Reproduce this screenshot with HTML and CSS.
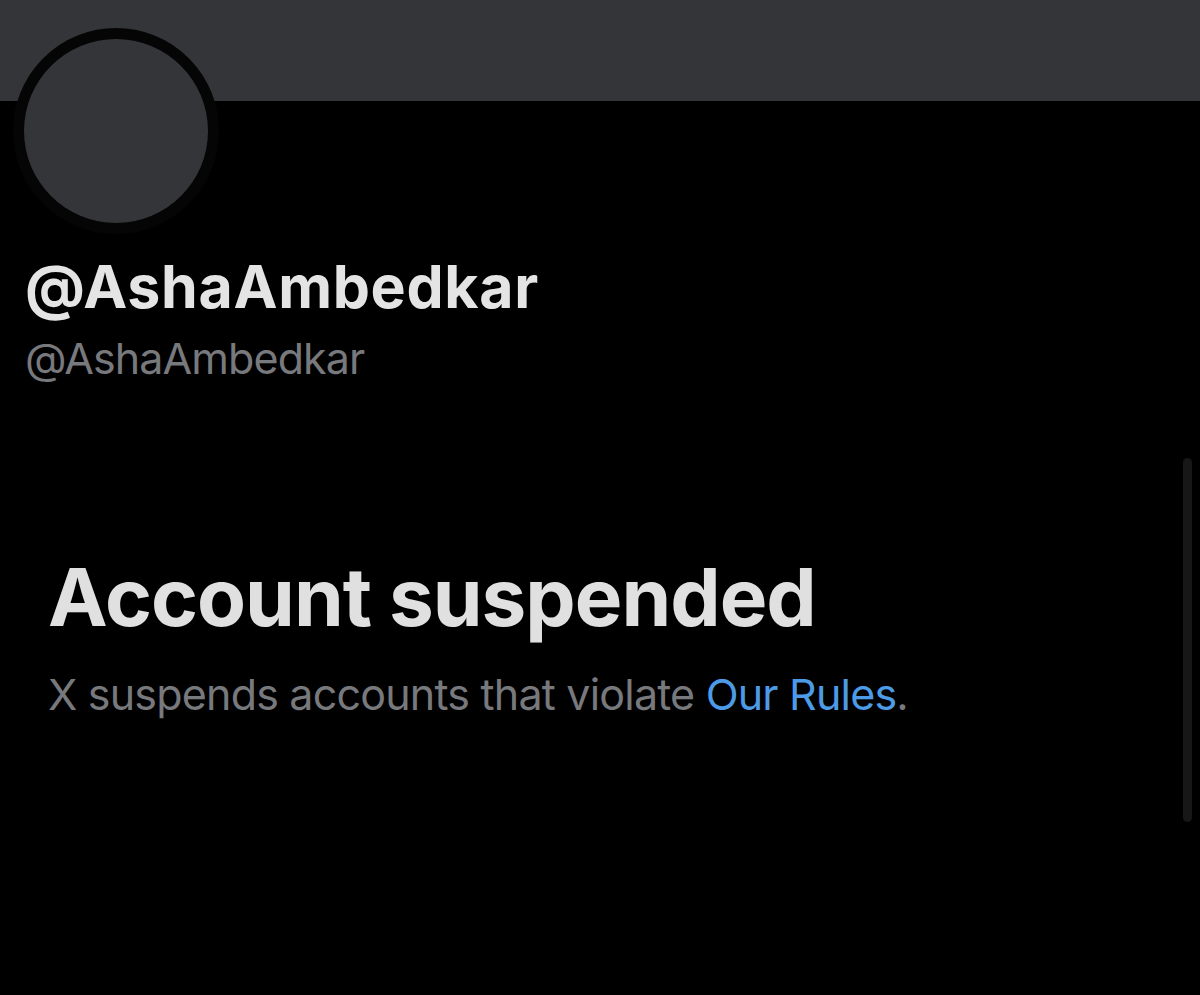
FILE: index.html
```html
<!DOCTYPE html>
<html lang="en">
<head>
<meta charset="utf-8">
<title>@AshaAmbedkar</title>
<link rel="stylesheet" href="styles.css">
</head>
<body>
<div class="page">
  <div class="banner"></div>
  <div class="avatar"><div class="avatar-inner"></div></div>
  <div class="names">
    <div class="display-name">@AshaAmbedkar</div>
    <div class="handle">@AshaAmbedkar</div>
  </div>
  <div class="suspended">
    <h1 class="title">Account suspended</h1>
    <p class="desc">X suspends accounts that violate <a class="link" href="#">Our Rules</a>.</p>
  </div>
  <div class="scrollbar"></div>
</div>
</body>
</html>
```
FILE: styles.css
```css
html, body {
  margin: 0;
  padding: 0;
  background: #000;
}
body {
  font-family: Inter, "Noto Sans", "Liberation Sans", sans-serif;
  color: #e2e2e2;
  width: 1200px;
  height: 995px;
  overflow: hidden;
}
.page {
  position: relative;
  height: 995px;
}
.banner {
  height: 101px;
  background: #333539;
}
.avatar {
  margin: -73px 0 0 13px;
  width: 184px;
  height: 184px;
  border: 11px solid #050505;
  border-radius: 50%;
  background: #000;
  position: relative;
}
.avatar-inner {
  width: 100%;
  height: 100%;
  border-radius: 50%;
  background: #333539;
}
.names {
  padding-left: 25px;
  margin-top: 21px;
}
.display-name {
  font-size: 59px;
  font-weight: 700;
  line-height: 64px;
  color: #e4e4e4;
  letter-spacing: 0.7px;
}
.handle {
  font-size: 43px;
  font-weight: 400;
  line-height: 44px;
  color: #77797d;
  margin-top: 17px;
  letter-spacing: -0.9px;
}
.suspended {
  padding-left: 48px;
  margin-top: 171px;
}
.title {
  margin: 0;
  font-size: 80px;
  font-weight: 700;
  line-height: 92px;
  color: #e0e0e0;
  letter-spacing: -1px;
}
.desc {
  margin: 29px 0 0;
  font-size: 43px;
  line-height: 44px;
  color: #77797d;
  letter-spacing: -0.8px;
}
.link {
  color: #4d9be6;
  text-decoration: none;
}
.scrollbar {
  position: absolute;
  left: 1183px;
  top: 458px;
  width: 9px;
  height: 364px;
  border-radius: 5px;
  background: #171717;
}
```
